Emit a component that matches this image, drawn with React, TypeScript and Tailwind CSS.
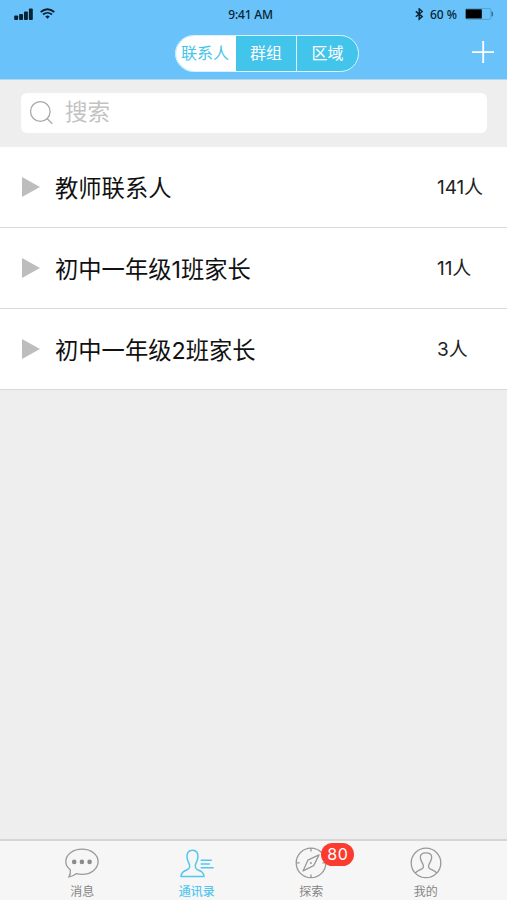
import React from "react";

const groups = [
  { name: "教师联系人", count: "141人" },
  { name: "初中一年级1班家长", count: "11人" },
  { name: "初中一年级2班家长", count: "3人" },
];

function SignalIcon() {
  return (
    <svg width="19" height="13" viewBox="0 0 19 13" fill="#082233">
      <rect x="0.2" y="7.4" width="3.9" height="4.6" rx="0.9" />
      <rect x="5.1" y="5.9" width="3.9" height="6.1" rx="0.9" />
      <rect x="10" y="3.4" width="3.9" height="8.6" rx="0.9" />
      <rect x="14.9" y="0.6" width="3.9" height="11.4" rx="0.9" />
    </svg>
  );
}

function WifiIcon() {
  return (
    <svg width="16" height="12" viewBox="0 0 16 12" fill="none" stroke="#082233">
      <path d="M0.7 3.9Q7.5 -1.6 14.3 3.9" strokeWidth="1.9" />
      <path d="M3 6.5Q7.5 3 12 6.5" strokeWidth="1.7" />
      <path d="M7.5 10.8L5.3 8.5Q7.5 6.7 9.7 8.5Z" fill="#082233" stroke="none" />
    </svg>
  );
}

function BluetoothIcon() {
  return (
    <svg width="9" height="13" viewBox="0 0 9 13" fill="none" stroke="#082233" strokeWidth="1.4">
      <path d="M0.8 3.4L7.2 8.6L4.2 11.3V0.9L7.2 3.5L0.8 8.7" />
    </svg>
  );
}

function BatteryIcon() {
  return (
    <svg width="29" height="13" viewBox="0 0 29 13">
      <rect x="0.5" y="0.4" width="25.5" height="11" rx="2" fill="none" stroke="#468bb7" strokeWidth="0.6" />
      <rect x="0.8" y="1.3" width="16" height="9.2" fill="#000" />
      <path d="M27 3.7Q28.5 5.9 27 8.3Z" fill="#285f80" stroke="#285f80" strokeWidth="0.6" />
    </svg>
  );
}

function ChatIcon() {
  return (
    <svg width="36" height="32" viewBox="0 0 36 32" fill="none" stroke="#9a9a9a" strokeWidth="1.3">
      <path d="M6.3 22.8C3.2 20.7 1.8 18 1.8 14.6C1.8 7.4 9 2.1 18 2.1S34.1 7.4 34.1 14.6S27 27.4 18 27.4C16 27.4 14 27.1 12.2 26.7C10 28.4 7.8 29.4 5 29.9C6.3 27.8 6.6 25.5 6.3 22.8Z" />
      <g fill="#8b8b8b" stroke="none">
        <circle cx="10.2" cy="14.9" r="2.3" />
        <circle cx="17.9" cy="14.9" r="2.3" />
        <circle cx="25.6" cy="14.9" r="2.3" />
      </g>
    </svg>
  );
}

function ContactsIcon() {
  return (
    <svg width="36" height="32" viewBox="0 0 36 32" fill="none" stroke="#55c6ef" strokeWidth="1.5" strokeLinejoin="round">
      <path d="M13.5 3.3C17.5 3.3 19.4 6.1 18.9 10.2C18.6 13.5 17.2 15.7 16.5 17.5C15.8 20.5 16.4 21.7 18.6 22.7C22 24.1 24.6 25.3 25 29.5H2C2.4 25.4 4.6 24.2 8.2 22.7C10.6 21.7 11.2 20.4 10.4 17.5C9.7 15.6 8.3 13.5 8 10.2C7.5 6.1 9.5 3.3 13.5 3.3Z" />
      <path d="M21.7 13.3H32.8M21.7 17H30.8M21.7 20.7H34.6" />
    </svg>
  );
}

function CompassIcon() {
  return (
    <svg width="36" height="32" viewBox="0 0 36 32" fill="none" stroke="#999" strokeWidth="1.3">
      <circle cx="18" cy="15.9" r="14.8" />
      <path d="M18 1V4.4M18 27.4V30.8M3.2 15.9H6.6M29.4 15.9H32.8" />
      <path d="M26 7.9L14.9 13.2L10 23.9L20.7 18.6Z" strokeLinejoin="round" />
      <circle cx="17.9" cy="16" r="1" fill="#999" stroke="none" />
    </svg>
  );
}

function ProfileIcon() {
  return (
    <svg width="36" height="32" viewBox="0 0 36 32" fill="none" stroke="#999" strokeWidth="1.3">
      <circle cx="18" cy="15.9" r="14.8" />
      <path d="M7.3 26.1C8.4 23.9 11.2 23.3 13.6 22.1C15.5 21.1 15.9 19.7 15 17.4C13.9 15 12.3 13 12.3 10.2C12.3 7.4 14.4 5.9 18 5.9S23.7 7.4 23.7 10.2C23.7 13 22.1 15 21 17.4C20.1 19.7 20.5 21.1 22.4 22.1C24.8 23.3 27.6 23.9 28.7 26.1" />
    </svg>
  );
}

const tabs = [
  { label: "消息", Icon: ChatIcon, active: false, badge: "" },
  { label: "通讯录", Icon: ContactsIcon, active: true, badge: "" },
  { label: "探索", Icon: CompassIcon, active: false, badge: "80" },
  { label: "我的", Icon: ProfileIcon, active: false, badge: "" },
];

export default function App() {
  return (
    <div className="flex h-[900px] w-[507px] flex-col overflow-hidden bg-[#eeeeee] font-['Inter','Noto_Sans_CJK_SC',sans-serif]">
      <header className="h-20 shrink-0 border-b border-[#b5d6e9] bg-[#69c2f9]">
        <div className="grid h-7 grid-cols-3 items-center font-['Noto_Sans',sans-serif] text-[12px] font-medium text-[#082233]">
          <div className="flex items-center gap-[7px] pl-[14px]">
            <SignalIcon />
            <WifiIcon />
          </div>
          <div className="pr-[6px] pt-px text-center tracking-[-0.2px]">9:41 AM</div>
          <div className="flex items-center justify-end pr-[13px]">
            <BluetoothIcon />
            <span className="ml-[6px] mr-[8px] whitespace-nowrap pt-px">60 %</span>
            <BatteryIcon />
          </div>
        </div>
        <div className="flex h-[51px] items-start pl-[175px] pt-[7px]">
          <div className="flex h-[37px] w-[184px] overflow-hidden rounded-full border border-[#d9f4ff] bg-[#43c4ea] text-[16px] leading-[35px] text-white">
            <div className="w-[60px] bg-white pr-[2px] text-center text-[#43c4ea]">联系人</div>
            <div className="w-[61px] border-r border-[#d9f4ff] text-center">群组</div>
            <div className="w-[61px] text-center">区域</div>
          </div>
          <svg className="ml-[112px] mt-[5px]" width="24" height="24" viewBox="0 0 24 24" stroke="#fff" strokeWidth="1.8">
            <path d="M12.2 1V23M1 12.2H23" />
          </svg>
        </div>
      </header>

      <div className="h-[67px] shrink-0 px-[21px] pt-[13px]">
        <div className="flex h-10 w-[466px] items-center rounded-md bg-white pl-[8px]">
          <svg width="26" height="26" viewBox="0 0 26 26" fill="none" stroke="#a9a9a9" strokeWidth="1.3">
            <circle cx="11.3" cy="11.5" r="9.8" />
            <path d="M18.2 18.7L23.3 23.8" />
          </svg>
          <span className="-mt-px ml-[10px] text-[22.5px] leading-none text-[#c3c3c3]">搜索</span>
        </div>
      </div>

      <main className="shrink-0">
        {groups.map((group) => (
          <div key={group.name} className="flex h-[81px] items-center border-b border-[#d9d9d9] bg-white pl-[22px]">
            <svg width="18" height="20" viewBox="0 0 18 20" fill="#bdbdbd">
              <path d="M0 0L18 10L0 20Z" />
            </svg>
            <div className="ml-[15px] w-[382px] pt-[3px] text-[23.3px] leading-8 text-[#111]">{group.name}</div>
            <div className="pt-[2px] text-[19px] leading-8 tracking-[-0.1px] text-[#222]">{group.count}</div>
          </div>
        ))}
      </main>

      <nav className="mt-auto flex h-[61px] shrink-0 border-t-2 border-[#d6d6d6] bg-[#f6f6f6] pl-[25px]">
        {tabs.map(({ label, Icon, active, badge }) => (
          <div key={label} className="flex w-[114.5px] flex-col items-center pt-[6px]">
            <div className="relative">
              <Icon />
              {badge && (
                <span className="absolute left-[28px] top-[-4px] h-[23px] w-[33px] rounded-full bg-[#fb3b30] text-center text-[16px] leading-[23px] tracking-[0.5px] text-white">
                  {badge}
                </span>
              )}
            </div>
            <span className={active ? "mt-[5px] text-[12px] font-medium leading-4 text-[#55c6ef]" : "mt-[5px] text-[12px] leading-4 text-[#858585]"}>
              {label}
            </span>
          </div>
        ))}
      </nav>
    </div>
  );
}
